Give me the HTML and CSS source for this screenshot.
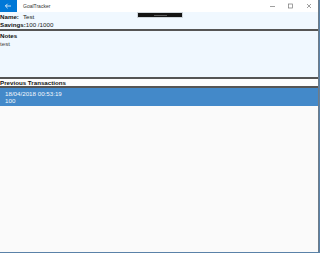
FILE: index.html
```html
<!DOCTYPE html>
<html lang="en">
<head>
  <meta charset="UTF-8">
  <title>GoalTracker</title>
  <link rel="stylesheet" href="styles.css">
</head>
<body>
  <div class="window">
    <div class="titlebar">
      <div class="back-btn">
        <svg width="17" height="12" viewBox="0 0 17 12">
          <path d="M11 6H5.4M7.6 3.8L5.4 6l2.2 2.2" fill="none" stroke="#fff" stroke-width="0.8"/>
        </svg>
      </div>
      <span class="app-title">GoalTracker</span>
      <div class="caption-btns">
        <span class="cap-btn">
          <svg width="18" height="12" viewBox="0 0 18 12"><path d="M6 6.5h5" stroke="#777" stroke-width="0.7"/></svg>
        </span>
        <span class="cap-btn">
          <svg width="18" height="12" viewBox="0 0 18 12"><rect x="6.5" y="4" width="4" height="4" fill="none" stroke="#777" stroke-width="0.7"/></svg>
        </span>
        <span class="cap-btn">
          <svg width="18" height="12" viewBox="0 0 18 12"><path d="M7 4l4 4M11 4l-4 4" stroke="#777" stroke-width="0.7"/></svg>
        </span>
      </div>
    </div>

    <div class="page">
      <div class="debug-bar"><span></span></div>

      <section class="goal-info">
        <div class="row"><span class="label">Name:</span><span class="value name-value">Test</span></div>
        <div class="row"><span class="label">Savings:</span><span class="value">100 /1000</span></div>
      </section>

      <section class="notes">
        <div class="label">Notes</div>
        <div class="notes-text">test</div>
      </section>

      <div class="list-header label">Previous Transactions</div>

      <ul class="transactions">
        <li class="selected">
          <div>18/04/2018 00:53:19</div>
          <div>100</div>
        </li>
      </ul>
    </div>
  </div>
</body>
</html>
```

FILE: styles.css
```css
body {
  margin: 0;
  padding: 0;
  background: #5a82a8;
  font-family: 'Liberation Sans', Arial, sans-serif;
  font-size: 6.2px;
  color: #222;
}

.window {
  width: 318px;
  height: 252px;
  border-right: 1px solid #6f7c88;
  display: flex;
  flex-direction: column;
  background: #fafafa;
}

.titlebar {
  height: 12px;
  display: flex;
  align-items: center;
  background: #ffffff;
}

.back-btn {
  width: 17px;
  height: 12px;
  background: #0078d7;
}

.back-btn svg,
.cap-btn svg {
  display: block;
}

.app-title {
  margin-left: 6px;
  font-size: 5px;
  color: #333;
}

.caption-btns {
  margin-left: auto;
  display: flex;
}

.cap-btn {
  width: 18px;
  height: 12px;
}

.page {
  position: relative;
  flex: 1;
  display: flex;
  flex-direction: column;
}

.debug-bar {
  position: absolute;
  left: 137px;
  top: 0;
  width: 44px;
  height: 4px;
  background: #141414;
  border: 0.5px solid #cfd6dc;
  display: flex;
  align-items: center;
  justify-content: center;
}

.debug-bar span {
  width: 13px;
  height: 1px;
  background: #5c5c5c;
}

.label {
  font-weight: 700;
  color: #111;
}

.goal-info {
  background: #f0f8ff;
  height: 15.5px;
  padding-top: 1px;
  border-bottom: 2px solid #555;
}

.row {
  height: 8px;
  line-height: 8px;
  display: flex;
}

.name-value {
  margin-left: 4px;
}

.notes {
  background: #f0f8ff;
  height: 45.5px;
  line-height: 8px;
  padding-top: 1px;
  border-bottom: 2px solid #555;
}

.notes-text {
  line-height: 7px;
  color: #444;
}

.list-header {
  height: 7px;
  line-height: 8px;
  background: #fdfdfd;
  border-bottom: 2px solid #555;
}

.transactions {
  list-style: none;
  margin: 0;
  padding: 0;
  flex: 1;
  background: #fafafa;
}

.transactions li {
  height: 16px;
  padding: 2px 0 0 5px;
  line-height: 7px;
}

.transactions li.selected {
  background: #4389c9;
  color: #f4f8fc;
}
```
